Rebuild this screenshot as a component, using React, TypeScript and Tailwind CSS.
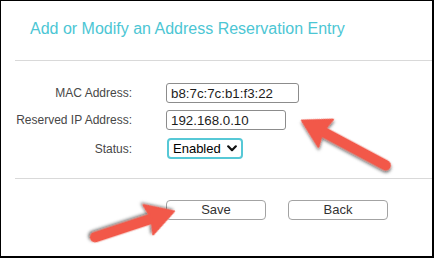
const font = { fontFamily: '"Liberation Sans", Arial, sans-serif' }

const Arrow = ({ x, y, angle, len }: { x: number; y: number; angle: number; len: number }) => (
  <g transform={`translate(${x} ${y}) rotate(${angle})`} filter="url(#arrowShadow)">
    <line x1={20} y1={0} x2={len} y2={0} stroke="#f2584a" strokeWidth={10.5} strokeLinecap="round" />
    <path d="M1 0 L28 -15.5 L24.5 0 L28 15.5 Z" fill="#f2584a" stroke="#f2584a" strokeWidth={2} strokeLinejoin="round" />
  </g>
)

export default function App() {
  const rows = [
    { label: 'MAC Address:', value: 'b8:7c:7c:b1:f3:22', width: 'w-[133px]', mt: '' },
    { label: 'Reserved IP Address:', value: '192.168.0.10', width: 'w-[120px]', mt: 'mt-[7px]' },
  ]

  return (
    <div className="relative w-[434px] h-[258px] overflow-hidden bg-white border-l border-t border-r-2 border-b-2 border-black" style={font}>
      {/* heading */}
      <div className="h-[59px] pt-[19px] pl-[29px]">
        <h1 className="text-[16px] leading-[18px] text-[#4cc6d4]">Add or Modify an Address Reservation Entry</h1>
      </div>
      <div className="ml-[14px] h-px bg-[#d9d9d9]" />

      {/* form */}
      <div className="pt-[22px] flex flex-col">
        {rows.map((row) => (
          <div key={row.label} className={`flex items-center h-[20px] ${row.mt}`}>
            <label className="w-[131px] text-right text-[12px] text-[#474747]">{row.label}</label>
            <input
              readOnly
              defaultValue={row.value}
              className={`ml-[34px] h-[20px] ${row.width} px-[4px] border border-[#8c8c8c] rounded-[3px] text-[13.3px] text-[#1c1c1c] outline-none`}
              style={font}
            />
          </div>
        ))}
        <div className="flex items-center h-[21px] mt-[8px]">
          <label className="w-[131px] text-right text-[12px] text-[#474747]">Status:</label>
          <div className="ml-[35px] h-[21px] w-[76px] flex items-center justify-between pl-[4px] pr-[4px] border-2 border-[#56c8d6] rounded-[4px] text-[13px] text-black">
            <span>Enabled</span>
            <svg width="10" height="7" viewBox="0 0 10 7" fill="none">
              <path d="M1.2 1.3 L5 5.2 L8.8 1.3" stroke="#111" strokeWidth="2.2" strokeLinecap="round" strokeLinejoin="round" />
            </svg>
          </div>
        </div>
      </div>

      <div className="ml-[14px] mt-[19px] h-px bg-[#d9d9d9]" />

      {/* actions */}
      <div className="flex mt-[21px] ml-[165px] gap-[22px]">
        <button className="w-[100px] h-[20px] border border-[#a3a3a3] rounded-[4px] bg-white text-[13px] leading-[18px] text-[#333]" style={font}>
          Save
        </button>
        <button className="w-[100px] h-[20px] border border-[#a3a3a3] rounded-[4px] bg-white text-[13px] leading-[18px] text-[#333]" style={font}>
          Back
        </button>
      </div>

      {/* annotation arrows */}
      <svg className="absolute left-[-1px] top-[-1px] pointer-events-none" width="434" height="258" viewBox="0 0 434 258">
        <defs>
          <filter id="arrowShadow" x="-20%" y="-40%" width="140%" height="180%">
            <feDropShadow dx="1.2" dy="1.8" stdDeviation="1.4" floodColor="#000" floodOpacity="0.55" />
          </filter>
        </defs>
        <Arrow x={301} y={120} angle={28.1} len={96} />
        <Arrow x={175} y={211} angle={161.8} len={84} />
      </svg>
    </div>
  )
}
